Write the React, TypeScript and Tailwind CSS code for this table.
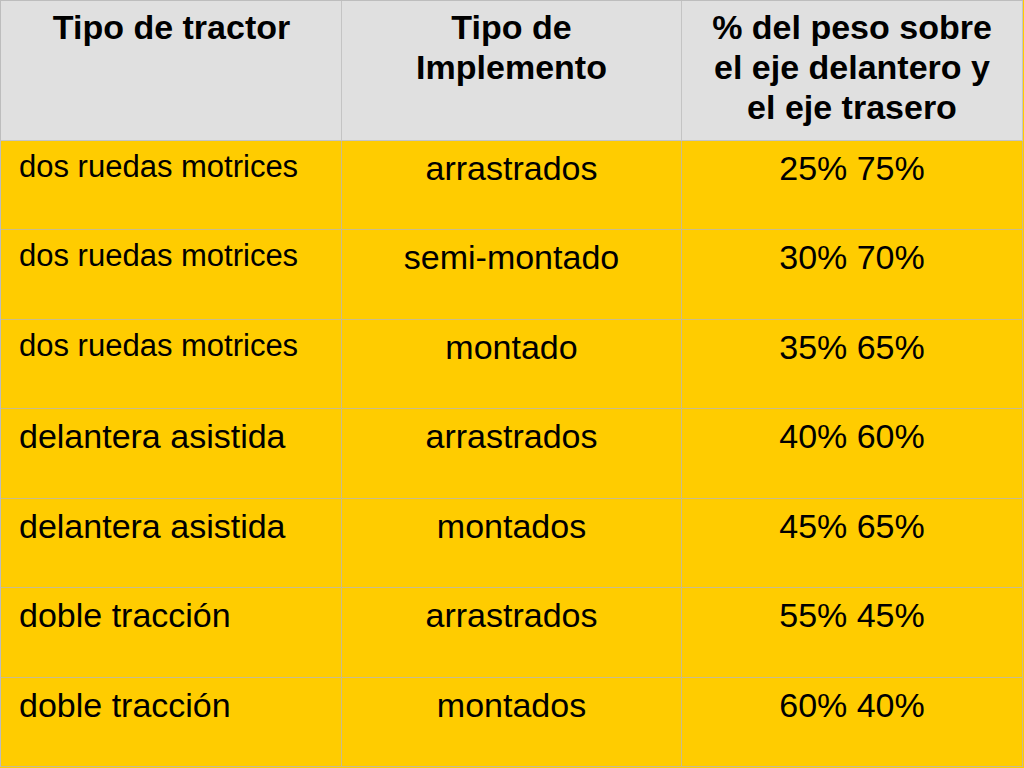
import React from "react";

const rows: { a: string; small: boolean; b: string; c: string }[] = [
  { a: "dos ruedas motrices", small: true, b: "arrastrados", c: "25% 75%" },
  { a: "dos ruedas motrices", small: true, b: "semi-montado", c: "30% 70%" },
  { a: "dos ruedas motrices", small: true, b: "montado", c: "35% 65%" },
  { a: "delantera asistida", small: false, b: "arrastrados", c: "40% 60%" },
  { a: "delantera asistida", small: false, b: "montados", c: "45% 65%" },
  { a: "doble tracción", small: false, b: "arrastrados", c: "55% 45%" },
  { a: "doble tracción", small: false, b: "montados", c: "60% 40%" },
];

export default function App() {
  return (
    <div
      className="w-[1024px] h-[768px] bg-[#ffcc00] text-black overflow-hidden"
      style={{ fontFamily: '"Liberation Sans", Arial, sans-serif' }}
    >
      <div className="grid grid-cols-[341px_340px_341px] grid-rows-[140px_89px_90px_89px_90px_89px_90px_89px] w-[1023px] h-[767px] border-l border-t border-[#bdbdbd]">
        <div className="bg-[#e0e0e0] border-r border-b border-[#c4c4c4] text-center font-bold text-[34px] leading-[40px] pt-[6px] pl-px">
          Tipo de tractor
        </div>
        <div className="bg-[#e0e0e0] border-r border-b border-[#c4c4c4] text-center font-bold text-[34px] leading-[40px] pt-[6px] px-4">
          Tipo de
          <br />
          Implemento
        </div>
        <div className="bg-[#e0e0e0] border-r border-b border-[#c4c4c4] text-center font-bold text-[34px] leading-[40px] pt-[6px]">
          % del peso sobre
          <br />
          el eje delantero y
          <br />
          el eje trasero
        </div>
        {rows.map((r, i) => (
          <React.Fragment key={i}>
            <div
              className={
                r.small
                  ? "bg-[#ffcc00] border-r border-b border-[#c9bc8c] pl-[18px] pt-[7px] text-[31px] leading-[37px] whitespace-nowrap"
                  : "bg-[#ffcc00] border-r border-b border-[#c9bc8c] pl-[18px] pt-[7px] text-[34px] leading-[41px] whitespace-nowrap"
              }
            >
              {r.a}
            </div>
            <div className="bg-[#ffcc00] border-r border-b border-[#c9bc8c] text-center pt-[7px] text-[34px] leading-[41px]">
              {r.b}
            </div>
            <div className="bg-[#ffcc00] border-r border-b border-[#c9bc8c] text-center pt-[7px] text-[34px] leading-[41px]">
              {r.c}
            </div>
          </React.Fragment>
        ))}
      </div>
    </div>
  );
}
